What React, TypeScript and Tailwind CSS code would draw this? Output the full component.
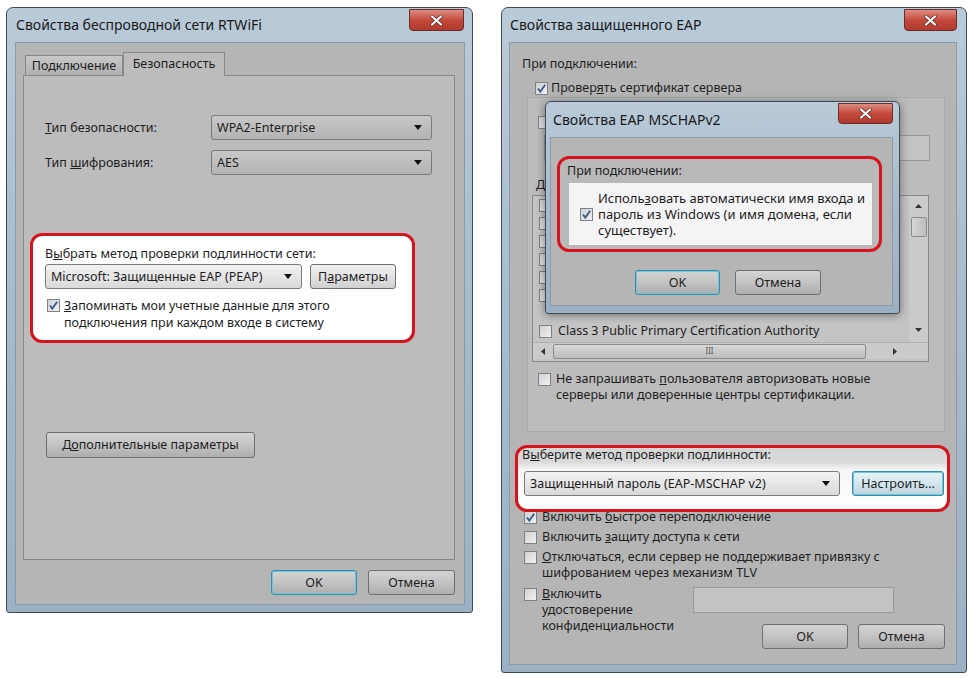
import React from "react";

type P = { className?: string; children?: React.ReactNode };

function CloseBtn({ className = "" }: P) {
  return (
    <div
      className={`absolute flex items-center justify-center rounded-b-[4px] border border-[#6b2d27] bg-gradient-to-b from-[#dc8c82] via-[#c5493d] to-[#b0392d] ${className}`}
    >
      <svg width="13" height="11" viewBox="0 0 13 11">
        <path d="M2 1.5 L11 9.5 M11 1.5 L2 9.5" stroke="#5a2520" strokeWidth="3.6" strokeLinecap="round" />
        <path d="M2 1.5 L11 9.5 M11 1.5 L2 9.5" stroke="#ffffff" strokeWidth="2.2" strokeLinecap="round" />
      </svg>
    </div>
  );
}

function Check({ checked = false, className = "" }: { checked?: boolean; className?: string }) {
  return (
    <span
      className={`inline-flex h-[13px] w-[13px] shrink-0 items-center justify-center border border-[#7f8284] bg-gradient-to-br from-[#cfd1d3] to-[#f1f1f1] ${className}`}
    >
      {checked && (
        <svg width="11" height="11" viewBox="0 0 11 11">
          <path d="M2 5.5 L4.3 8.6 L9.2 1.8" fill="none" stroke="#3d5d8f" strokeWidth="1.9" />
        </svg>
      )}
    </span>
  );
}

function Arrow() {
  return (
    <svg width="8" height="5" viewBox="0 0 8 5" className="shrink-0">
      <path d="M0 0 L8 0 L4 5 Z" fill="#111" />
    </svg>
  );
}

function Select({ className = "", children, light = false }: P & { light?: boolean }) {
  return (
    <div
      className={`flex h-[25px] items-center justify-between rounded-[3px] border border-[#7b7b7b] pl-[5px] pr-[9px] ${
        light ? "bg-gradient-to-b from-[#f3f3f3] to-[#d9d9d9]" : "bg-gradient-to-b from-[#c8c8c8] to-[#b3b3b3]"
      } ${className}`}
    >
      <span className="truncate">{children}</span>
      <Arrow />
    </div>
  );
}

function Btn({ className = "", children, focus = false }: P & { focus?: boolean }) {
  return (
    <div
      className={`flex h-[25px] shrink-0 items-center justify-center rounded-[3px] border bg-gradient-to-b from-[#d3d3d3] via-[#c3c3c3] to-[#adadad] ${
        focus ? "border-[#2f8fae] shadow-[inset_0_0_0_1px_#74c3d9]" : "border-[#6f6f6f]"
      } ${className}`}
    >
      {children}
    </div>
  );
}

function WinFrame({ className = "", children }: P) {
  return (
    <div
      className={`relative flex shrink-0 flex-col rounded-t-[7px] rounded-b-[3px] border border-[#3f4c58] bg-gradient-to-b from-[#b9cad8] via-[#a7bbcc] to-[#9bb0c2] ${className}`}
    >
      {children}
    </div>
  );
}

function LeftWindow() {
  return (
    <WinFrame className="h-[606px] w-[467px] pb-[7px] pl-[8px] pr-[7px]">
      <div className="flex h-[34px] items-center pl-[1px] text-[14px] text-[#1a1a1a]">Свойства беспроводной сети RTWiFi</div>
      <CloseBtn className="right-[8px] top-[1px] h-[22px] w-[55px]" />
      <div className="flex flex-1 flex-col border border-[#8b9aa8] bg-[#b5b5b5] pl-[7px] pr-[9px] pt-[9px]">
        {/* tabs */}
        <div className="flex h-[23px] items-end pl-[2px]">
          <div className="flex h-[20px] w-[98px] items-center justify-center border border-b-0 border-[#878787] bg-gradient-to-b from-[#c9c9c9] to-[#b0b0b0]">
            Подключение
          </div>
          <div className="relative z-10 -mb-px flex h-[24px] w-[102px] items-start justify-center border border-b-0 border-[#878787] bg-[#bcbcbc] pt-[3px]">
            Безопасность
          </div>
        </div>
        <div className="flex h-[485px] flex-col border border-[#888888] bg-[#bcbcbc]">
          <div className="mt-[39px] flex items-center pl-[21px]">
            <span className="w-[166px]">
              <u>Т</u>ип безопасности:
            </span>
            <Select className="w-[221px]">WPA2-Enterprise</Select>
          </div>
          <div className="mt-[10px] flex items-center pl-[21px]">
            <span className="w-[166px]">
              Тип <u>ш</u>ифрования:
            </span>
            <Select className="w-[221px]">AES</Select>
          </div>
          <div className="ml-[6px] mt-[58px] h-[110px] w-[385px] rounded-[12px] border-[3px] border-[#d6141d] bg-white pl-[12px] pt-[10px]">
            <div>
              В<u>ы</u>брать метод проверки подлинности сети:
            </div>
            <div className="mt-[2px] flex gap-[8px]">
              <Select light className="w-[257px]">
                Microsoft: Защищенные EAP (PEAP)
              </Select>
              <Btn className="w-[86px] from-[#f0f0f0] via-[#e3e3e3] to-[#cfcfcf]">
                П<u>а</u>раметры
              </Btn>
            </div>
            <div className="mt-[8px] flex items-start leading-[17px]">
              <Check checked className="ml-[2px] mt-[2px]" />
              <span className="ml-[4px]">
                <u>З</u>апоминать мои учетные данные для этого
                <br />
                подключения при каждом входе в систему
              </span>
            </div>
          </div>
          <Btn className="ml-[22px] mt-[89px] h-[26px] w-[209px]">
            Д<u>о</u>полнительные параметры
          </Btn>
        </div>
        <div className="mt-[10px] flex justify-end gap-[11px]">
          <Btn focus className="w-[86px]">
            OK
          </Btn>
          <Btn className="w-[87px]">Отмена</Btn>
        </div>
      </div>
    </WinFrame>
  );
}

const certs = [
  "AddTrust External CA Root",
  "Baltimore CyberTrust Root",
  "Certum CA",
  "Class 3 Public Primary Certification Authority - G2",
  "DigiCert Assured ID Root CA",
  "DigiCert High Assurance EV Root CA",
  "",
  "Class 3 Public Primary Certification Authority",
];

function NestedDialog() {
  return (
    <div className="absolute left-[43px] top-[93px] z-20 flex h-[213px] w-[355px] flex-col rounded-t-[6px] rounded-b-[3px] border border-[#3f4c58] bg-gradient-to-b from-[#b9cad8] via-[#a7bbcc] to-[#9bb0c2] pb-[7px] pl-[4px] pr-[6px] shadow-[0_1px_8px_rgba(0,0,0,0.45)]">
      <div className="flex h-[35px] items-center pl-[3px] text-[14px] text-[#1a1a1a]">Свойства EAP MSCHAPv2</div>
      <CloseBtn className="right-[6px] top-[1px] h-[21px] w-[55px]" />
      <div className="flex flex-1 flex-col border border-[#8b9aa8] bg-[#b5b5b5]">
        <div className="ml-[6px] mt-[18px] h-[96px] w-[325px] rounded-[12px] border-[3px] border-[#d6141d] bg-[#b9b9b9] pl-[7px] pt-[4px]">
          <div>При подключении:</div>
          <div className="ml-[2px] mt-[4px] flex h-[62px] w-[303px] items-center bg-[#f4f4f4] pl-[11px]">
            <Check checked />
            <span className="ml-[5px] text-[13px]">
              Испол<span>ь</span>
              <u>з</u>овать автоматически имя входа и
              <br />
              пароль из Windows (и имя домена, если
              <br />
              существует).
            </span>
          </div>
        </div>
        <div className="ml-[84px] mt-[18px] flex gap-[15px]">
          <Btn focus className="w-[85px]">
            OK
          </Btn>
          <Btn className="w-[86px]">Отмена</Btn>
        </div>
      </div>
    </div>
  );
}

function RightWindow() {
  return (
    <WinFrame className="h-[666px] w-[466px] pb-[7px] pl-[7px] pr-[9px]">
      <div className="flex h-[34px] items-center pl-[1px] text-[14px] text-[#1a1a1a]">Свойства защищенного EAP</div>
      <CloseBtn className="right-[9px] top-[1px] h-[22px] w-[53px]" />
      <NestedDialog />
      <div className="flex flex-1 flex-col border border-[#8b9aa8] bg-[#b5b5b5]">
        <div className="pl-[12px] pt-[13px]">При подключении:</div>
        <div className="ml-[25px] mt-[8px] flex items-start">
          <Check checked className="mt-[2px]" />
          <span className="ml-[3px]">
            Провер<u>я</u>ть сертификат сервера
          </span>
        </div>
        {/* group */}
        <div className="ml-[17px] mt-px flex h-[335px] w-[418px] flex-col border border-[#a9a9a9] bg-[#bcbcbc]">
          <div className="ml-[10px] mt-[16px] flex items-center">
            <Check />
            <span className="ml-[4px]">Подключаться к этим серверам:</span>
          </div>
          <div className="ml-[16px] mt-[5px] h-[26px] w-[386px] border border-[#9a9a9a] bg-[#c3c3c3]" />
          <div className="ml-[8px] mt-[16px]">Доверенные корневые центры сертификации:</div>
          <div className="ml-[4px] mt-[2px] flex h-[167px] w-[397px] flex-col border border-[#888888] bg-[#c4c4c4]">
            <div className="flex h-[146px]">
              <div className="flex flex-1 flex-col overflow-hidden pl-[6px]">
                {certs.map((c, i) => (
                  <div key={i} className="flex h-[18px] shrink-0 items-center whitespace-nowrap">
                    {c && <Check />}
                    <span className="ml-[6px]">{c}</span>
                  </div>
                ))}
              </div>
              <div className="flex w-[19px] flex-col items-center bg-[#cbcbcb]">
                <svg width="7" height="4" viewBox="0 0 7 4" className="mt-[8px]">
                  <path d="M0 4 L7 4 L3.5 0 Z" fill="#333" />
                </svg>
                <div className="mt-[9px] h-[20px] w-[16px] rounded-[2px] border border-[#8c8c8c] bg-gradient-to-r from-[#d6d6d6] to-[#bdbdbd]" />
                <div className="flex-1" />
                <svg width="7" height="4" viewBox="0 0 7 4" className="mb-[10px]">
                  <path d="M0 0 L7 0 L3.5 4 Z" fill="#333" />
                </svg>
              </div>
            </div>
            <div className="flex h-[17px] items-center border-t border-[#b0b0b0] bg-[#cbcbcb]">
              <svg width="4" height="7" viewBox="0 0 4 7" className="ml-[8px]">
                <path d="M4 0 L4 7 L0 3.5 Z" fill="#333" />
              </svg>
              <div className="ml-[8px] flex h-[15px] w-[313px] items-center justify-center rounded-[2px] border border-[#8c8c8c] bg-gradient-to-b from-[#d8d8d8] to-[#bcbcbc] text-[8px] leading-none text-[#555]">
                III
              </div>
              <svg width="4" height="7" viewBox="0 0 4 7" className="ml-[27px]">
                <path d="M0 0 L0 7 L4 3.5 Z" fill="#333" />
              </svg>
            </div>
          </div>
          <div className="ml-[10px] mt-[9px] flex items-start">
            <Check className="mt-[2px]" />
            <span className="ml-[5px]">
              Не запрашивать <u>п</u>ользователя авторизовать новые
              <br />
              серверы или доверенные центры сертификации.
            </span>
          </div>
        </div>
        {/* red box */}
        <div className="relative z-10 ml-[5px] mt-[13px] h-[67px] w-[435px] rounded-[12px] border-[3px] border-[#d6141d] bg-[linear-gradient(to_bottom,#d5d5d5_0px,#dadada_14px,#f6f6f6_22px,#ffffff_100%)] pl-[4px]">
          <div className="-mt-px">
            В<u>ы</u>берите метод проверки подлинности:
          </div>
          <div className="ml-[2px] mt-[8px] flex gap-[12px]">
            <Select light className="w-[316px]">
              Защищенный пароль (EAP-MSCHAP v2)
            </Select>
            <Btn focus className="w-[92px] from-[#e6f3f8] via-[#d4e7ef] to-[#bcd3dd]">
              Настроить...
            </Btn>
          </div>
        </div>
        <div className="ml-[14px] -mt-[3px] flex items-start">
          <Check checked className="mt-[2px]" />
          <span className="ml-[5px]">
            Включить <u>б</u>ыстрое переподключение
          </span>
        </div>
        <div className="ml-[14px] mt-[4px] flex items-start">
          <Check className="mt-[2px]" />
          <span className="ml-[5px]">
            Включить <u>з</u>ащиту доступа к сети
          </span>
        </div>
        <div className="ml-[14px] mt-[4px] flex items-start">
          <Check className="mt-[2px]" />
          <span className="ml-[5px]">
            <u>О</u>тключаться, если сервер не поддерживает привязку с
            <br />
            шифрованием через механизм TLV
          </span>
        </div>
        <div className="ml-[14px] mr-[11px] mt-[5px] flex">
          <div className="flex w-[169px] items-start">
            <Check className="mt-[2px]" />
            <span className="ml-[5px]">
              <u>В</u>ключить
              <br />
              удостоверение
              <br />
              конфиденциальности
            </span>
          </div>
          <div className="flex flex-1 flex-col">
            <div className="mt-px h-[26px] w-[201px] border border-[#9a9a9a] bg-[#c3c3c3]" />
            <div className="mt-[11px] flex justify-end gap-[10px]">
              <Btn className="w-[86px]">OK</Btn>
              <Btn className="w-[87px]">Отмена</Btn>
            </div>
          </div>
        </div>
      </div>
    </WinFrame>
  );
}

export default function App() {
  return (
    <div className="h-[678px] w-[975px] overflow-hidden bg-white font-['Noto_Sans',sans-serif] text-[12.5px] leading-[16px] text-[#1e1e1e]">
      <div className="flex items-start gap-[28px] pl-[6px] pt-[7px]">
        <LeftWindow />
        <RightWindow />
      </div>
    </div>
  );
}
